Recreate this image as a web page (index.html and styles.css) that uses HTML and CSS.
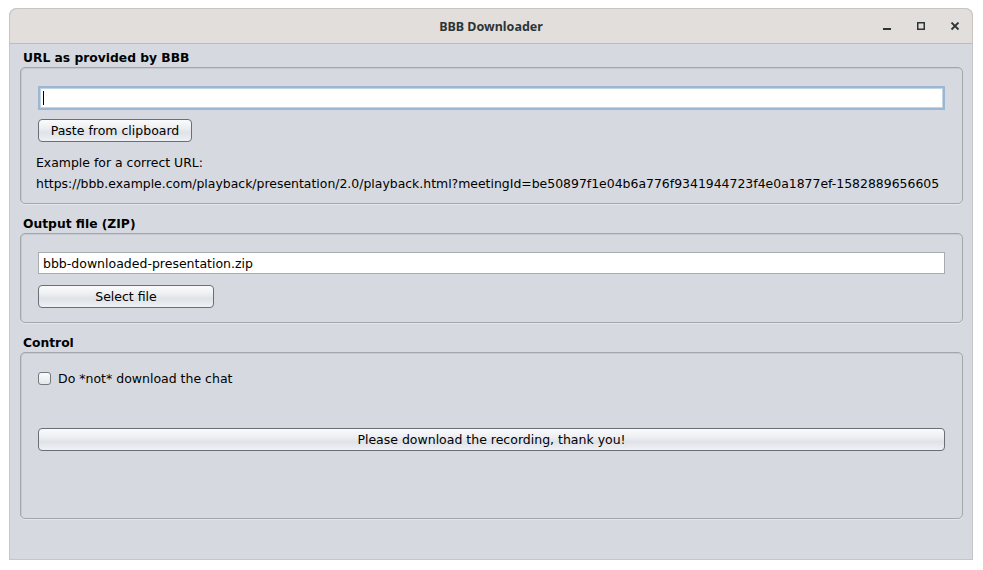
FILE: index.html
```html
<!DOCTYPE html>
<html>
<head>
<meta charset="utf-8">
<title>BBB Downloader</title>
<link rel="stylesheet" href="styles.css">
</head>
<body>
<div class="window">
  <div class="titlebar">
    <div class="title">BBB Downloader</div>
    <div class="controls">
      <svg class="ctl" width="10" height="10" viewBox="0 0 10 10"><rect x="1" y="6" width="8" height="2" fill="#2e3436"/></svg>
      <svg class="ctl" width="10" height="10" viewBox="0 0 10 10"><rect x="1.75" y="0.75" width="6.5" height="6.5" fill="none" stroke="#2e3436" stroke-width="1.5"/></svg>
      <svg class="ctl" width="10" height="10" viewBox="0 0 10 10"><path d="M1.5 0.5 L8.5 7.5 M8.5 0.5 L1.5 7.5" stroke="#2e3436" stroke-width="1.8"/></svg>
    </div>
  </div>
  <div class="content">
    <div class="label">URL as provided by BBB</div>
    <div class="panel panel-url">
      <div class="field focus"><span class="caret"></span></div>
      <div class="btn btn-paste">Paste from clipboard</div>
      <div class="text text-first">Example for a correct URL:</div>
      <div class="text">https://bbb.example.com/playback/presentation/2.0/playback.html?meetingId=be50897f1e04b6a776f9341944723f4e0a1877ef-1582889656605</div>
    </div>

    <div class="label label-gap">Output file (ZIP)</div>
    <div class="panel panel-out">
      <div class="field plain">bbb-downloaded-presentation.zip</div>
      <div class="btn btn-select">Select file</div>
    </div>

    <div class="label label-gap">Control</div>
    <div class="panel panel-ctl">
      <label class="check"><span class="box"></span>Do *not* download the chat</label>
      <div class="btn btn-wide">Please download the recording, thank you!</div>
    </div>
  </div>
</div>
</body>
</html>
```

FILE: styles.css
```css
html, body {
  margin: 0;
  padding: 0;
  background: #ffffff;
}
body {
  font-family: "DejaVu Sans", sans-serif;
  font-size: 12px;
  color: #000;
}
.window {
  margin: 8px 0 0 9px;
  width: 964px;
  height: 552px;
  box-sizing: border-box;
  background: #d6d9df;
  border: 1px solid #c4c6ca;
  border-top: none;
  border-radius: 8px 8px 0 0;
  display: flex;
  flex-direction: column;
}
.titlebar {
  height: 36px;
  box-sizing: border-box;
  background: #e1dedb;
  border: 1px solid #c8c5c1;
  border-bottom: 1px solid #bfbcb7;
  margin: 0 -1px;
  border-radius: 8px 8px 0 0;
  position: relative;
  display: flex;
  align-items: center;
  justify-content: center;
}
.title {
  font-family: "Noto Sans", "DejaVu Sans", sans-serif;
  font-weight: bold;
  font-size: 12.5px;
  color: #2e3436;
  padding-top: 1px;
}
.controls {
  position: absolute;
  right: 12px;
  top: 13px;
  display: flex;
  gap: 24px;
}
.ctl { display: block; }
.content {
  padding: 5px 9px 0 10px;
  display: flex;
  flex-direction: column;
}
.label {
  font-weight: bold;
  font-size: 12.3px;
  height: 18px;
  line-height: 19px;
  padding-left: 3px;
}
.label-gap { margin-top: 11px; }
.panel {
  border: 1px solid #a2a6ad;
  border-radius: 5px;
  box-shadow: inset 1px 1px 0 #c6c9cf, 0 1px 0 #e4e6ea;
  box-sizing: border-box;
  padding: 18px 17px 0 17px;
  display: flex;
  flex-direction: column;
  align-items: flex-start;
}
.panel-url { height: 137px; }
.panel-out { height: 90px; }
.panel-ctl { height: 167px; padding-top: 19px; }
.field {
  align-self: stretch;
  box-sizing: border-box;
  background: #fff;
  display: flex;
  align-items: center;
  padding-left: 4px;
}
.field.focus {
  height: 24px;
  border: 2px solid #9cb7d3;
  box-shadow: inset 0 0 0 1px #c4d3e3;
  padding-left: 3px;
}
.caret {
  width: 1px;
  height: 14px;
  background: #000;
}
.field.plain {
  height: 22px;
  border: 1px solid #a9acb1;
  font-size: 12.5px;
}
.btn {
  box-sizing: border-box;
  height: 23px;
  border: 1px solid #6a6f77;
  border-radius: 4px;
  background: linear-gradient(#fbfbfc 0%, #eceef1 40%, #dfe2e7 60%, #eff1f4 100%);
  display: flex;
  align-items: center;
  justify-content: center;
  font-size: 12.5px;
}
.btn-paste { width: 154px; margin-top: 9px; }
.btn-select { width: 176px; margin-top: 11px; }
.btn-wide { align-self: stretch; margin-top: 43px; }
.text {
  font-size: 12.45px;
  line-height: 21px;
  margin-left: -2px;
}
.text-first { margin-top: 10px; }
.check {
  display: flex;
  align-items: center;
  gap: 7px;
  font-size: 12.5px;
  height: 13px;
}
.box {
  width: 13px;
  height: 13px;
  box-sizing: border-box;
  border: 1px solid #74787f;
  border-radius: 3px;
  background: linear-gradient(#fafbfc, #e4e7eb);
}
```
